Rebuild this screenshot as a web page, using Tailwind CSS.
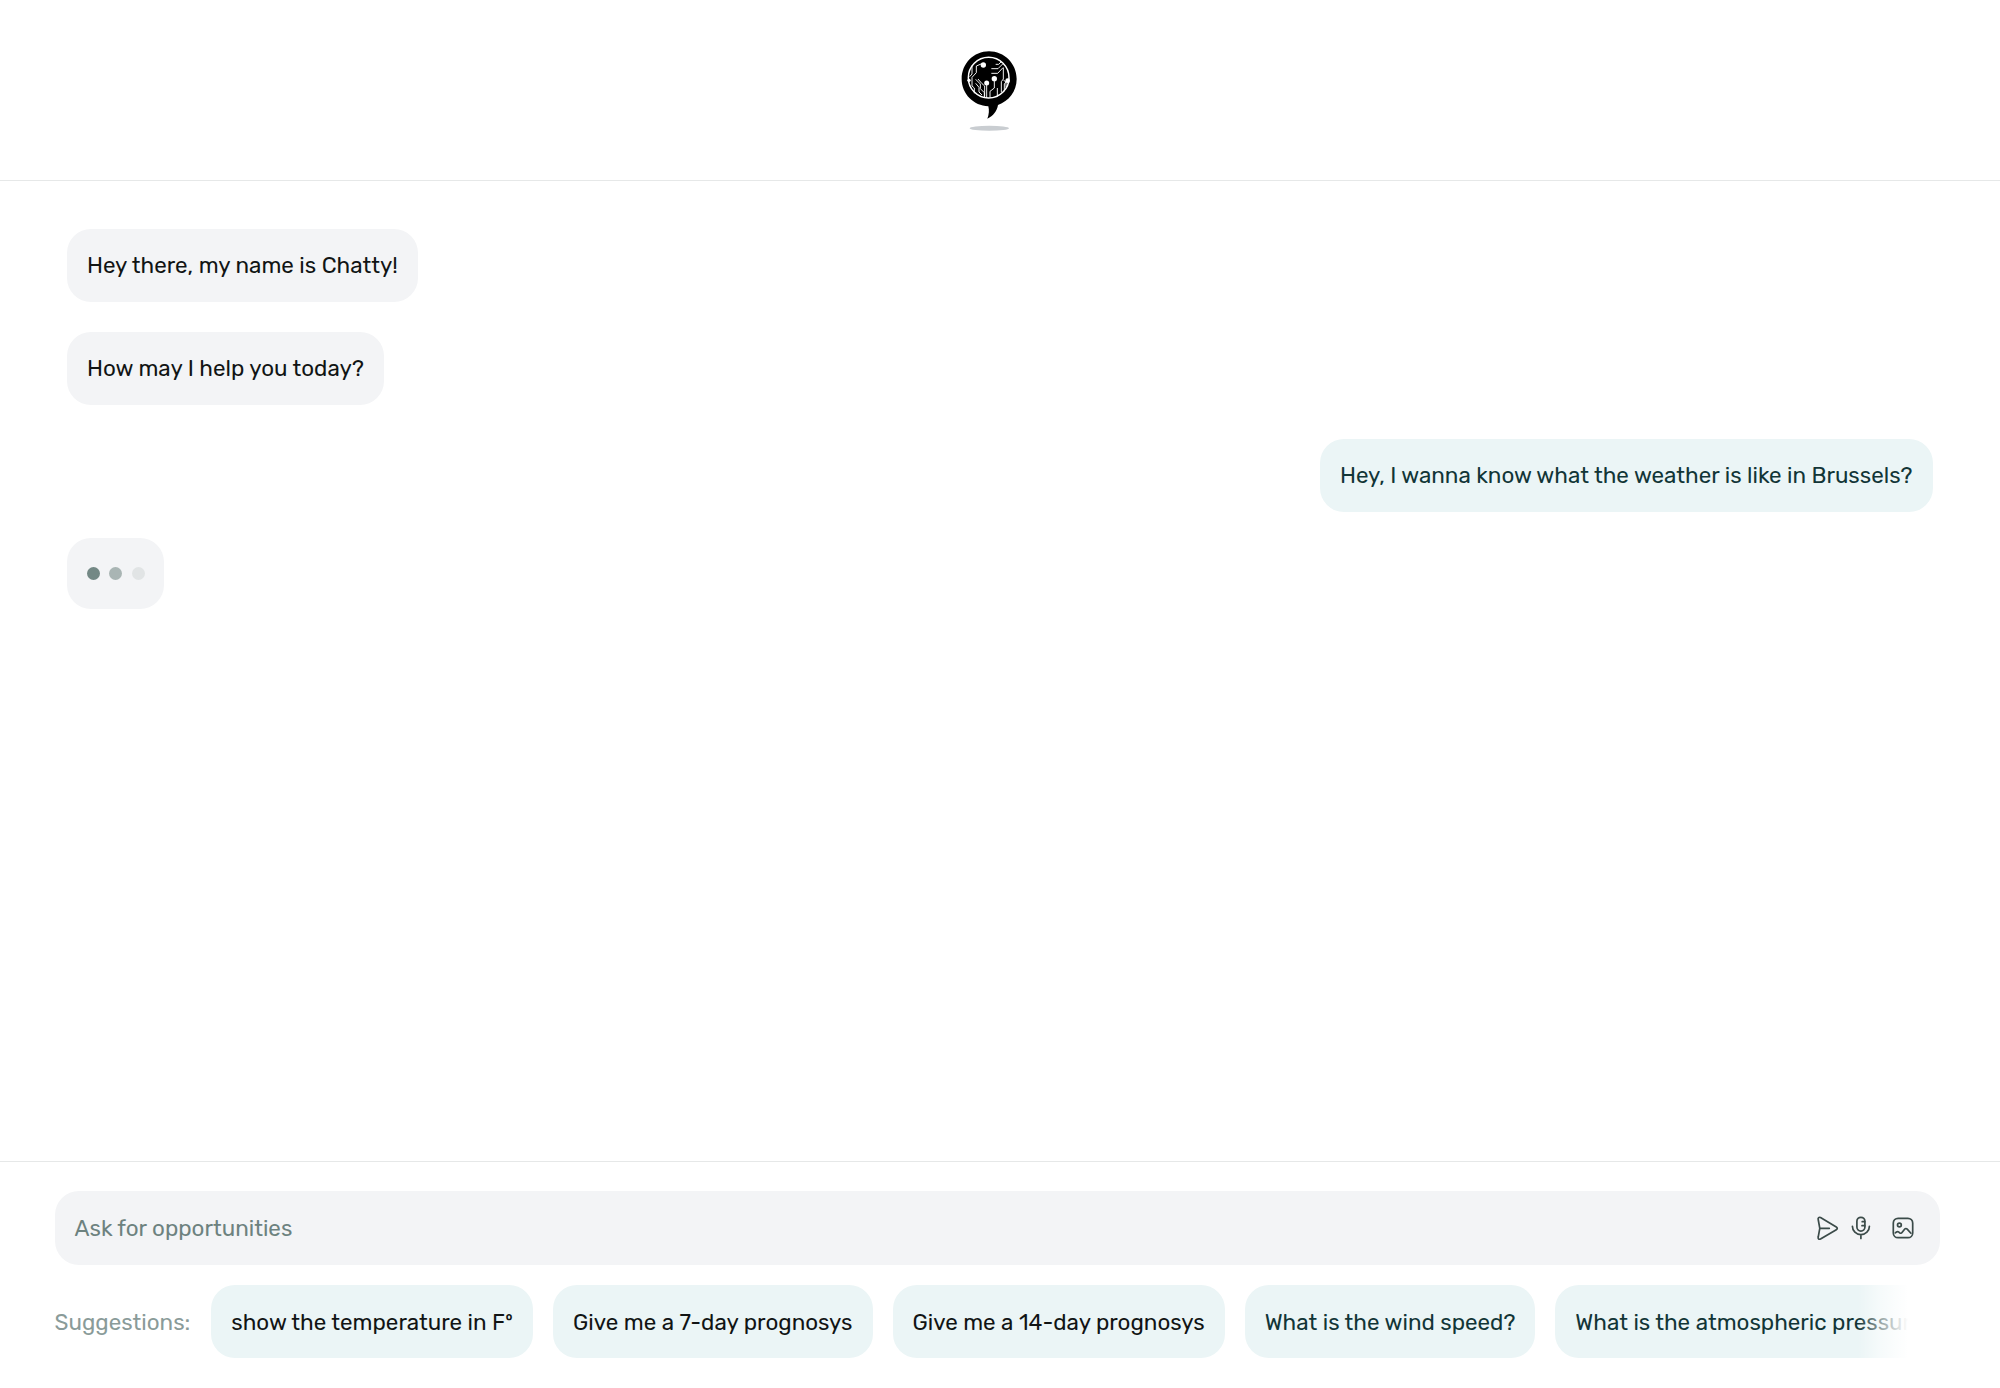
<!DOCTYPE html>
<html lang="en">
<head>
<meta charset="utf-8">
<title>Chatty</title>
<script src="https://cdn.jsdelivr.net/npm/@tailwindcss/browser@4"></script>
</head>
<body class="flex h-[1388px] w-[2000px] flex-col overflow-hidden bg-white font-[Rubik,Roboto,sans-serif] text-[22.4px] leading-[34px] whitespace-nowrap text-[#111414]">
  <header class="flex h-[181px] shrink-0 justify-center border-b border-[#e6e8e8] pt-10 pr-5">
    <svg class="size-[100px]" viewBox="0 0 300 300" fill="none">
      <ellipse cx="148" cy="265" rx="59" ry="7.5" fill="#c9cdd1"/>
      <path d="M147 34c46 0 83 37 83 83 0 37-24 67-56 78-3 18-14 33-32 41 5-13 6-25 3-37-44-2-80-37-80-82 0-46 36-83 82-83z" fill="#000"/>
      <circle cx="146" cy="113" r="61" stroke="#fff" stroke-width="4.500"/>
      <g stroke="#fff" stroke-width="2.8">
        <path d="M123 72l-14 6v20l-13 14v26l7 6v16M96 77v25l-7 8M107 118l14 14v14l12 12v14M107 130l10 12v14l9 9M114 117l12 14 8 7v34M140 130v44M163 118v26l-13 10v18M154 86h20l14-14M154 100h19l16-17M167 73h9l8-8M190 83v34l-6 8v32M190 120l8 6v16M172 170v-26M203 120l-10 12v22"/>
      </g>
      <g fill="#fff"><circle cx="130" cy="75" r="8"/><circle cx="140" cy="129" r="7.5"/><circle cx="163" cy="116" r="8"/><circle cx="203" cy="122" r="7"/><circle cx="87" cy="121" r="5"/></g>
    </svg>
  </header>

  <main class="flex grow flex-col pt-12 pr-[67px] pl-[67px]">
    <div class="flex h-[73px] items-center self-start rounded-3xl bg-[#f3f4f6] px-5 pt-px">Hey there, my name is Chatty!</div>
    <div class="mt-[30px] flex h-[73px] items-center self-start rounded-3xl bg-[#f3f4f6] px-5 pt-px">How may I help you today?</div>
    <div class="mt-[34px] flex h-[73px] w-[613px] items-center self-end rounded-3xl bg-[#ebf5f6] px-5 pt-px text-[#123537]">Hey, I wanna know what the weather is like in Brussels?</div>
    <div class="mt-[26px] flex h-[71px] w-[97px] items-center gap-[9.3px] rounded-3xl bg-[#f3f4f6] pl-5">
      <span class="size-[13px] rounded-full bg-[#738885]"></span>
      <span class="size-[13px] rounded-full bg-[#a9b5b4]"></span>
      <span class="size-[13px] rounded-full bg-[#e1e4e5]"></span>
    </div>
  </main>

  <footer class="h-[227px] shrink-0 border-t border-[#e6e8e8] pt-[29px] pl-[54.500px]">
    <div class="flex h-[74px] w-[1885.300px] items-center rounded-3xl bg-[#f3f4f6] pl-5 text-[#6d827f]">
      <span class="pt-0.5">Ask for opportunities</span>
      <svg class="ml-auto h-[74px] w-[125px]" viewBox="0 0 125 74" fill="none" stroke="#3b4b49" stroke-width="1.7" stroke-linecap="round" stroke-linejoin="round">
        <path d="M3.2 28.500c-.5-1.700.9-2.600 2.300-1.900l15.800 9.300c1.300.8 1.300 2 0 2.800L5.500 48c-1.400.7-2.800-.2-2.300-1.900l1.600-8.800zM4.800 37.300h9.500"/>
        <rect x="41.900" y="26.300" width="8" height="13.800" rx="4"/>
        <path d="M37.400 35.300a8.500 8.300 0 0 0 17 0M45.900 43.700v3.800M49.700 30.700h-2.500M49.700 34.700h-2.700"/>
        <rect x="78.300" y="27.300" width="19.400" height="19.400" rx="4.800"/>
        <circle cx="84.400" cy="34" r="1.900"/>
        <path d="M80.300 41.900l1.200-.9c.8-.6 1.700-.5 2.400.1l.8.7c.8.7 1.700.6 2.300-.2l2.600-3.400c.7-.9 1.900-.9 2.600-.1l3.700 4.100"/>
      </svg>
    </div>
    <div class="mt-5 flex h-[73px] items-center">
      <span class="w-[156.800px] pt-0.5 text-[#8a9b99]">Suggestions:</span>
      <div class="relative flex h-full w-[1697px] gap-5 overflow-hidden">
        <div class="flex shrink-0 items-center rounded-3xl bg-[#ebf5f6] px-5 pt-0.5">show the temperature in Fº</div>
        <div class="flex shrink-0 items-center rounded-3xl bg-[#ebf5f6] px-5 pt-0.5">Give me a 7-day prognosys</div>
        <div class="flex shrink-0 items-center rounded-3xl bg-[#ebf5f6] px-5 pt-0.5">Give me a 14-day prognosys</div>
        <div class="flex shrink-0 items-center rounded-3xl bg-[#ebf5f6] px-5 pt-0.5 text-[#123537]">What is the wind speed?</div>
        <div class="flex shrink-0 items-center rounded-3xl bg-[#ebf5f6] px-5 pt-0.5 text-[#123537]">What is the atmospheric pressure?</div>
        <div class="absolute inset-y-0 right-0 w-[50px] bg-linear-to-r from-white/0 via-white/55 via-45% to-white"></div>
      </div>
    </div>
  </footer>
</body>
</html>
